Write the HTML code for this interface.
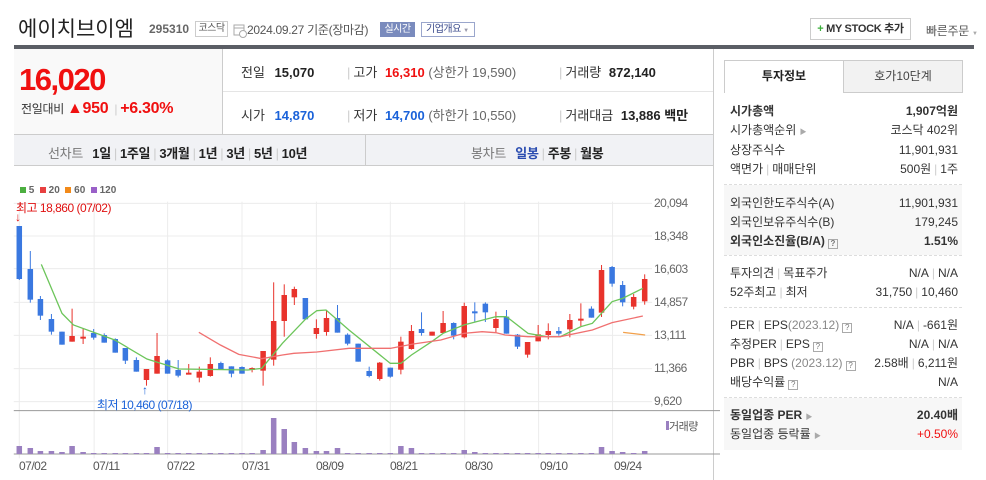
<!DOCTYPE html>
<html><head><meta charset="utf-8">
<style>
*{margin:0;padding:0;box-sizing:border-box}
body{width:986px;height:480px;background:#fff;font-family:"Liberation Sans","Noto Sans CJK KR",sans-serif;color:#333;position:relative;overflow:hidden;font-size:12px}
.a{position:absolute;white-space:nowrap}
.b{font-weight:bold}
.red{color:#f01010}.blue{color:#1a62d9}
.row{position:absolute;left:730px;width:228px;height:19px;line-height:19px;font-size:12px;color:#333}
.row .r{position:absolute;right:0;top:0}
.sep{color:#ccc;margin:0 3px}
.q{display:inline-block;width:10px;height:10px;border:1px solid #aaa;font-size:8px;line-height:8px;text-align:center;color:#777;vertical-align:-1px;margin-left:3px}
.dash{position:absolute;left:724px;width:238px;border-top:1px dashed #ddd}
</style></head><body>
<!-- header -->
<div class="a" style="left:18px;top:13px;font-size:21px;color:#222;letter-spacing:0px">에이치브이엠</div>
<div class="a b" style="left:149px;top:22px;font-size:12px;color:#666">295310</div>
<div class="a" style="left:195px;top:21px;width:33px;height:16px;border:1px solid #ccc;font-size:10px;line-height:14px;text-align:center;color:#555;letter-spacing:-0.5px">코스닥</div>
<svg class="a" style="left:233px;top:24px" width="14" height="14"><rect x="1" y="1" width="10" height="10" fill="none" stroke="#aaa"/><line x1="1" y1="4" x2="11" y2="4" stroke="#aaa"/><circle cx="10" cy="10" r="3.5" fill="#fff" stroke="#aaa"/></svg>
<div class="a" style="left:247px;top:21px;font-size:12px;color:#555;letter-spacing:-0.3px">2024.09.27 기준(장마감)</div>
<div class="a" style="left:380px;top:22px;width:35px;height:15px;background:#7a8bbd;color:#fff;font-size:10px;line-height:15px;text-align:center;letter-spacing:-0.5px">실시간</div>
<div class="a" style="left:421px;top:22px;width:54px;height:15px;border:1px solid #9aa6cc;color:#3b4b8c;font-size:10px;line-height:13px;padding-left:4px;letter-spacing:-0.5px">기업개요 <span style="font-size:6px;color:#99a">▼</span></div>
<div class="a" style="left:810px;top:18px;width:101px;height:22px;border:1px solid #ccc;font-size:11px;line-height:20px;text-align:center;font-weight:bold;color:#333;letter-spacing:-0.3px"><span style="color:#3bb03b">+</span> MY STOCK 추가</div>
<div class="a" style="left:926px;top:22px;font-size:12px;color:#555;letter-spacing:-0.3px">빠른주문 <span style="font-size:6px;color:#aaa">▼</span></div>
<div class="a" style="left:14px;top:45px;width:960px;height:4px;background:#5b5e65"></div>
<!-- price box -->
<div class="a" style="left:14px;top:49px;width:209px;height:85px;background:#f9f9f9;border-right:1px solid #ccc"></div>
<div class="a b red" style="left:19px;top:62px;font-size:31px;letter-spacing:-1.5px">16,020</div>
<div class="a" style="left:21px;top:100px;font-size:12px;color:#333;letter-spacing:-0.3px">전일대비 <span class="red b" style="font-size:16px">▲950</span> <span class="sep">|</span><span class="red b" style="font-size:16px">+6.30%</span></div>
<div class="a" style="left:223px;top:91px;width:490px;height:1px;background:#e5e5e5"></div>
<div class="a" style="left:713px;top:49px;width:1px;height:431px;background:#ccc"></div>
<div class="a" style="left:241px;top:62px;font-size:13px;color:#333">전일 <b style="margin-left:6px;color:#222">15,070</b></div>
<div class="a" style="left:344px;top:62px;font-size:13px;color:#333"><span class="sep">|</span>고가 <b class="red" style="margin-left:4px">16,310</b> <span style="color:#666">(상한가 19,590)</span></div>
<div class="a" style="left:556px;top:62px;font-size:13px;color:#333"><span class="sep">|</span>거래량 <b style="margin-left:4px;color:#222">872,140</b></div>
<div class="a" style="left:241px;top:105px;font-size:13px;color:#333">시가 <b class="blue" style="margin-left:6px">14,870</b></div>
<div class="a" style="left:344px;top:105px;font-size:13px;color:#333"><span class="sep">|</span>저가 <b class="blue" style="margin-left:4px">14,700</b> <span style="color:#666">(하한가 10,550)</span></div>
<div class="a" style="left:556px;top:105px;font-size:13px;color:#333"><span class="sep">|</span>거래대금 <b style="margin-left:4px;color:#222">13,886 백만</b></div>
<!-- chart tabs -->
<div class="a" style="left:14px;top:134px;width:699px;height:32px;background:#f1f2f5;border-top:1px solid #ccc;border-bottom:1px solid #ccc"></div>
<div class="a" style="left:365px;top:135px;width:1px;height:30px;background:#ccc"></div>
<div class="a" style="left:48px;top:143px;font-size:13px;color:#777;letter-spacing:-0.3px">선차트 <b style="color:#222;margin-left:6px">1일</b><span class="sep">|</span><b style="color:#222">1주일</b><span class="sep">|</span><b style="color:#222">3개월</b><span class="sep">|</span><b style="color:#222">1년</b><span class="sep">|</span><b style="color:#222">3년</b><span class="sep">|</span><b style="color:#222">5년</b><span class="sep">|</span><b style="color:#222">10년</b></div>
<div class="a" style="left:471px;top:143px;font-size:13px;color:#777;letter-spacing:-0.3px">봉차트 <b style="color:#2a4cb0;margin-left:6px">일봉</b><span class="sep">|</span><b style="color:#222">주봉</b><span class="sep">|</span><b style="color:#222">월봉</b></div>
<!-- chart -->
<svg class="a" id="ch" style="left:0;top:170px" width="720" height="310" viewBox="0 0 1568 930" preserveAspectRatio="none"></svg>
<div class="a" style="left:20px;top:185px;font-size:10px;color:#666;font-weight:bold"><span style="display:inline-block;width:6px;height:6px;background:#4caf40"></span> 5 &nbsp;<span style="display:inline-block;width:6px;height:6px;background:#e84040"></span> 20 &nbsp;<span style="display:inline-block;width:6px;height:6px;background:#f28a1a"></span> 60 &nbsp;<span style="display:inline-block;width:6px;height:6px;background:#9a60c8"></span> 120</div>
<div class="a" style="left:16px;top:199px;font-size:12px;color:#e01010;letter-spacing:-0.5px">최고 18,860 (07/02)</div>
<div class="a" style="left:15px;top:210px;font-size:12px;color:#e01010">↓</div>
<div class="a" style="left:142px;top:383px;font-size:12px;color:#1a62d9">↑</div>
<div class="a" style="left:97px;top:396px;font-size:12px;color:#1a62d9;letter-spacing:-0.5px">최저 10,460 (07/18)</div>
<div class="a" style="left:654px;top:196px;font-size:12px;color:#666;letter-spacing:-0.5px">20,094</div>
<div class="a" style="left:654px;top:229px;font-size:12px;color:#666;letter-spacing:-0.5px">18,348</div>
<div class="a" style="left:654px;top:262px;font-size:12px;color:#666;letter-spacing:-0.5px">16,603</div>
<div class="a" style="left:654px;top:295px;font-size:12px;color:#666;letter-spacing:-0.5px">14,857</div>
<div class="a" style="left:654px;top:328px;font-size:12px;color:#666;letter-spacing:-0.5px">13,111</div>
<div class="a" style="left:654px;top:361px;font-size:12px;color:#666;letter-spacing:-0.5px">11,366</div>
<div class="a" style="left:654px;top:394px;font-size:12px;color:#666;letter-spacing:-0.5px">9,620</div>
<div class="a" style="left:666px;top:418px;font-size:11px;color:#555;letter-spacing:-0.5px"><span style="display:inline-block;width:3px;height:9px;background:#9a80c0"></span>거래량</div>
<div class="a" style="left:19px;top:459px;font-size:12px;color:#555;letter-spacing:-0.5px">07/02</div>
<div class="a" style="left:93px;top:459px;font-size:12px;color:#555;letter-spacing:-0.5px">07/11</div>
<div class="a" style="left:167px;top:459px;font-size:12px;color:#555;letter-spacing:-0.5px">07/22</div>
<div class="a" style="left:242px;top:459px;font-size:12px;color:#555;letter-spacing:-0.5px">07/31</div>
<div class="a" style="left:316px;top:459px;font-size:12px;color:#555;letter-spacing:-0.5px">08/09</div>
<div class="a" style="left:390px;top:459px;font-size:12px;color:#555;letter-spacing:-0.5px">08/21</div>
<div class="a" style="left:465px;top:459px;font-size:12px;color:#555;letter-spacing:-0.5px">08/30</div>
<div class="a" style="left:540px;top:459px;font-size:12px;color:#555;letter-spacing:-0.5px">09/10</div>
<div class="a" style="left:614px;top:459px;font-size:12px;color:#555;letter-spacing:-0.5px">09/24</div>
<!-- right panel -->
<div class="a" style="left:724px;top:60px;width:120px;height:33px;border:1px solid #ccc;border-bottom:none;background:#fff;font-weight:bold;font-size:12px;line-height:31px;text-align:center;color:#222">투자정보</div>
<div class="a" style="left:843px;top:60px;width:120px;height:33px;border:1px solid #ccc;background:#f2f2f2;font-size:12px;line-height:31px;text-align:center;color:#444">호가10단계</div>
<div class="row b" style="top:102px">시가총액<span class="r">1,907억원</span></div>
<div class="row" style="top:121px">시가총액순위 <span style="font-size:7px;color:#aaa">▶</span><span class="r">코스닥 402위</span></div>
<div class="row" style="top:141px">상장주식수<span class="r">11,901,931</span></div>
<div class="row" style="top:160px">액면가<span class="sep">|</span>매매단위<span class="r">500원<span class="sep">|</span>1주</span></div>
<div class="dash" style="top:184px"></div>
<div class="a" style="left:724px;top:185px;width:238px;height:70px;background:#f7f7f7"></div>
<div class="row" style="top:194px">외국인한도주식수(A)<span class="r">11,901,931</span></div>
<div class="row" style="top:213px">외국인보유주식수(B)<span class="r">179,245</span></div>
<div class="row b" style="top:232px">외국인소진율(B/A)<span class="q">?</span><span class="r">1.51%</span></div>
<div class="dash" style="top:255px"></div>
<div class="row" style="top:264px">투자의견<span class="sep">|</span>목표주가<span class="r">N/A<span class="sep">|</span>N/A</span></div>
<div class="row" style="top:283px">52주최고<span class="sep">|</span>최저<span class="r">31,750<span class="sep">|</span>10,460</span></div>
<div class="dash" style="top:307px"></div>
<div class="row" style="top:316px">PER<span class="sep">|</span>EPS<span style="color:#888">(2023.12)</span><span class="q">?</span><span class="r">N/A<span class="sep">|</span>-661원</span></div>
<div class="row" style="top:335px">추정PER<span class="sep">|</span>EPS<span class="q">?</span><span class="r">N/A<span class="sep">|</span>N/A</span></div>
<div class="row" style="top:354px">PBR<span class="sep">|</span>BPS <span style="color:#888">(2023.12)</span><span class="q">?</span><span class="r">2.58배<span class="sep">|</span>6,211원</span></div>
<div class="row" style="top:373px">배당수익률<span class="q">?</span><span class="r">N/A</span></div>
<div class="dash" style="top:397px"></div>
<div class="a" style="left:724px;top:398px;width:238px;height:52px;background:#f7f7f7"></div>
<div class="row b" style="top:406px">동일업종 PER <span style="font-size:7px;color:#aaa;font-weight:normal">▶</span><span class="r">20.40배</span></div>
<div class="row" style="top:425px">동일업종 등락률 <span style="font-size:7px;color:#aaa">▶</span><span class="r red">+0.50%</span></div>
<script>
var C=[[42,'b',168,327,168,330],[66,'b',297,389,243,398],[88,'b',387,437,378,450],[112,'b',447,485,432,494],[135,'b',485,524,485,524],[157,'r',498,515,416,515],[181,'r',500,506,475,522],[204,'b',489,503,477,509],[227,'b',495,518,490,518],[251,'b',507,548,505,548],[273,'b',534,572,534,582],[297,'b',570,605,562,605],[319,'r',597,630,597,647],[342,'r',558,611,489,611],[365,'b',571,611,568,611],[388,'b',600,617,570,622],[411,'r',608,613,582,613],[434,'r',605,623,590,637],[458,'r',582,618,562,620],[481,'b',579,599,575,599],[504,'b',589,611,589,622],[527,'b',591,611,589,611],[549,'r',594,599,592,607],[573,'r',543,602,543,647],[596,'r',453,569,337,587],[619,'r',375,453,343,500],[641,'r',357,382,350,405],[665,'b',384,448,384,448],[689,'r',474,492,448,506],[711,'r',444,486,421,497],[735,'b',444,488,405,488],[757,'b',494,521,490,526],[780,'b',521,575,521,575],[804,'b',603,618,590,622],[827,'r',578,627,576,632],[850,'b',593,620,593,623],[873,'r',515,599,500,613],[896,'r',483,537,465,539],[918,'b',477,489,427,497],[941,'r',485,497,485,497],[965,'r',459,489,423,489],[988,'b',459,497,457,508],[1011,'r',408,502,398,505],[1034,'b',424,428,397,455],[1057,'b',401,427,397,456],[1080,'r',447,474,425,489],[1103,'b',440,491,420,491],[1127,'b',494,530,492,537],[1149,'r',516,554,516,563],[1172,'r',493,514,465,514],[1194,'r',483,495,460,508],[1217,'b',483,491,471,497],[1241,'r',450,478,432,502],[1265,'r',446,452,400,468],[1288,'b',416,443,409,443],[1310,'r',300,428,285,441],[1333,'b',291,341,288,350],[1356,'b',345,397,333,409],[1380,'r',381,410,372,418],[1404,'r',327,394,313,404]];
var V={42:828,66:834,88:843,112:843,135:846,157:828,181:846,342:831,573:840,596:744,619:777,641:816,665:834,689:843,711:843,735:834,873:828,896:834,1011:840,1034:846,1310:831,1333:843,1356:846,1404:843};
var s='',ns=' vector-effect="non-scaling-stroke"';
[100,198,296,397,496,596,695].forEach(function(y){s+='<line x1="30" x2="1420" y1="'+y+'" y2="'+y+'" stroke="#ececec"'+ns+'/>'});
[42,205,365,527,689,850,1012,1173,1334].forEach(function(x){s+='<line x1="'+x+'" x2="'+x+'" y1="95" y2="865" stroke="#ececec"'+ns+'/>'});
s+='<line x1="30" x2="1568" y1="722" y2="722" stroke="#999"'+ns+'/><line x1="30" x2="1568" y1="852" y2="852" stroke="#999"'+ns+'/>';
C.forEach(function(c){var col=c[1]=='r'?'#e8332c':'#3a78e0';s+='<line x1="'+c[0]+'" x2="'+c[0]+'" y1="'+c[4]+'" y2="'+c[5]+'" stroke="'+col+'"'+ns+'/><rect x="'+(c[0]-6)+'" y="'+c[2]+'" width="12" height="'+Math.max(6,c[3]-c[2])+'" fill="'+col+'"/>';
var v=V[c[0]]||849;s+='<rect x="'+(c[0]-6)+'" y="'+v+'" width="12" height="'+(852-v)+'" fill="#9a80c0"/>';});
function pl(p,c){s+='<polyline fill="none" stroke="'+c+'" stroke-width="1.3" points="'+p+'"'+ns+'/>'}
pl('90,283 135,430 160,465 250,510 320,567 390,597 540,600 570,595 615,520 665,448 690,422 710,420 760,480 850,580 873,580 896,555 940,515 965,490 1010,465 1080,440 1103,440 1150,490 1190,500 1220,500 1265,470 1290,460 1333,395 1356,385 1400,355','#6cc55a');
pl('433,487 480,525 520,553 570,566 615,555 640,550 690,546 760,535 850,535 900,522 960,510 1010,490 1050,485 1080,488 1100,495 1150,500 1220,500 1290,480 1333,458 1400,438','#f07070');
pl('1357,487 1405,495','#f2a04a');
document.getElementById('ch').innerHTML=s;
</script>
</body></html>
